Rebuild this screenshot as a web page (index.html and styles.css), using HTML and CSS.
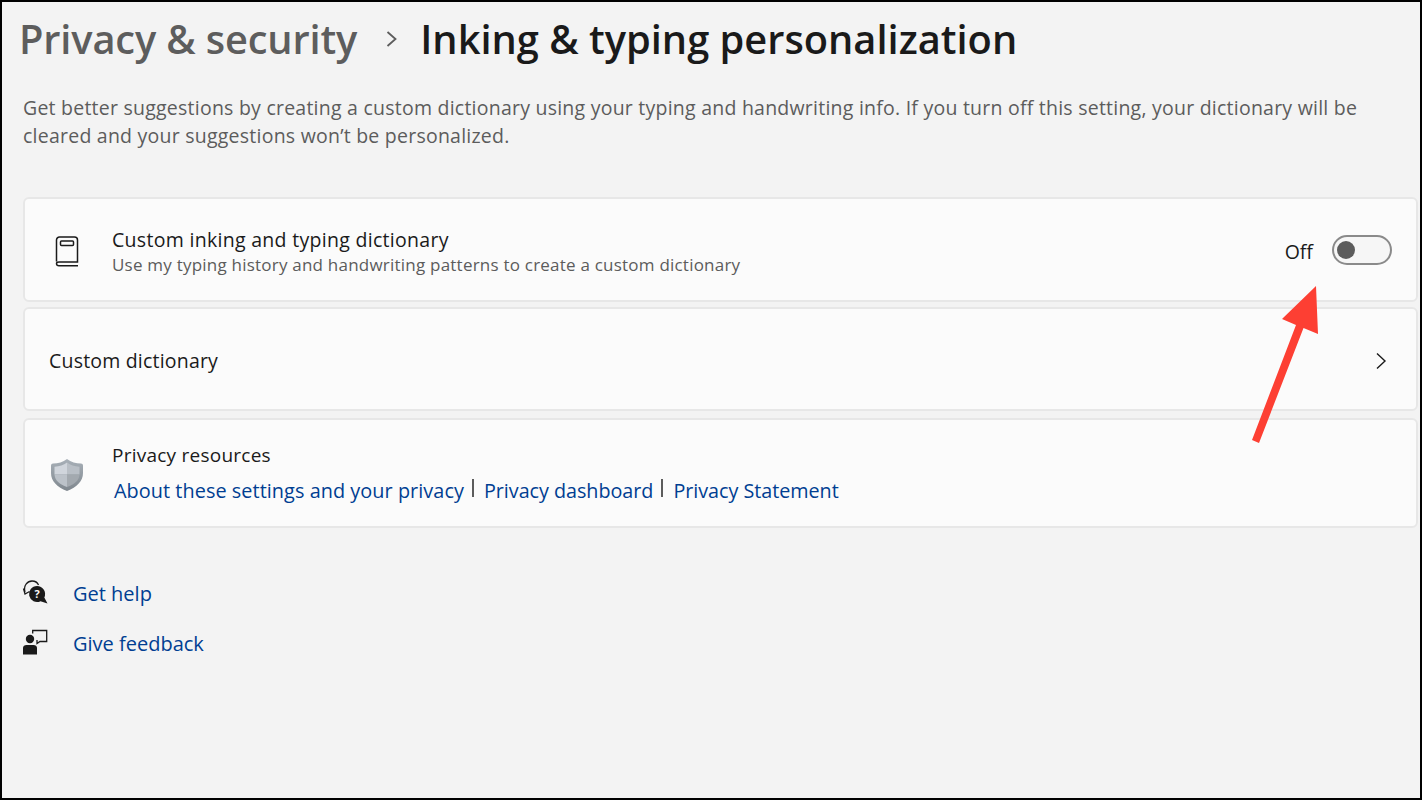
FILE: index.html
```html
<!DOCTYPE html>
<html lang="en">
<head>
<meta charset="utf-8">
<title>Inking &amp; typing personalization</title>
<link rel="stylesheet" href="styles.css">
</head>
<body>
<div class="frame">
  <header class="crumbs">
    <span class="crumb-parent">Privacy &amp; security</span>
    <svg class="crumb-sep" width="14" height="18" viewBox="0 0 14 18"><path d="M2.500 2 L10.500 9 L2.500 16" fill="none" stroke="#5c5c5c" stroke-width="1.800"/></svg>
    <span class="crumb-current">Inking &amp; typing personalization</span>
  </header>
  <p class="intro">Get better suggestions by creating a custom dictionary using your typing and handwriting info. If you turn off this setting, your dictionary will be cleared and your suggestions won’t be personalized.</p>
  <section class="cards">
    <div class="card card-dict">
      <svg class="card-icon" width="24" height="31" viewBox="0 0 24 31"><g fill="none" stroke="#1a1a1a" stroke-width="1.500"><path d="M1.500 25.500 V4 A3 3 0 0 1 4.500 1 H19.500 A3 3 0 0 1 22.500 4 V26 H4 C2.500 26 1.500 26.500 1.500 27.500 C1.500 29 2.500 29.800 4 29.800 H23"/><rect x="5.500" y="5" width="13" height="4.500" rx="1"/></g></svg>
      <div class="card-text">
        <div class="card-title card-title-wide">Custom inking and typing dictionary</div>
        <div class="card-sub">Use my typing history and handwriting patterns to create a custom dictionary</div>
      </div>
      <span class="toggle-label">Off</span>
      <span class="toggle"><span class="knob"></span></span>
    </div>
    <div class="card card-link">
      <span class="card-title card-title-mid">Custom dictionary</span>
      <svg width="12" height="18" viewBox="0 0 12 18"><path d="M2 1.500 L10 9 L2 16.500" fill="none" stroke="#1a1a1a" stroke-width="1.400"/></svg>
    </div>
    <div class="card card-privacy">
      <svg class="shield" width="34" height="34" viewBox="0 0 34 34">
        <defs>
          <linearGradient id="rim" x1="0" y1="0" x2="0" y2="1"><stop offset="0" stop-color="#a8b0b8"/><stop offset="1" stop-color="#7f878e"/></linearGradient>
        </defs>
        <path d="M17 1 C21 4 26 5.500 31 5.500 A2 2 0 0 1 33 7.500 V15 C33 23 27 29 17 33 C7 29 1 23 1 15 V7.500 A2 2 0 0 1 3 5.500 C8 5.500 13 4 17 1 Z" fill="url(#rim)"/>
        <path d="M17 4.500 C20.500 7 24.500 8.500 29.500 8.700 V16.500 H17 Z" fill="#b9bfc6"/>
        <path d="M17 4.500 C13.500 7 9.500 8.500 4.500 8.700 V16.500 H17 Z" fill="#d0d5dc"/>
        <path d="M4.500 16.500 H17 V29 C9.500 26.500 5 22.500 4.500 16.500 Z" fill="#bcc2c9"/>
        <path d="M29.500 16.500 H17 V29 C24.500 26.500 29 22.500 29.500 16.500 Z" fill="#a3a9af"/>
      </svg>
      <div class="card-text">
        <div class="card-title card-title-res">Privacy resources</div>
        <div class="links">
          <a class="link link-about">About these settings and your privacy</a><span class="bar"></span>
          <a class="link link-res">Privacy dashboard</a><span class="bar"></span>
          <a class="link link-res">Privacy Statement</a>
        </div>
      </div>
    </div>
  </section>
  <nav class="help">
    <div class="help-row">
      <svg class="help-icon" width="26" height="26" viewBox="0 0 26 26">
        <path d="M2 11 C0 4 5 0 9 0 C12 0 14.500 1.500 15.500 4" fill="none" stroke="#1a1a1a" stroke-width="1.300"/>
        <path d="M0.500 7.500 L2 13 L6.500 10.500" fill="none" stroke="#1a1a1a" stroke-width="1.300"/>
        <path d="M14 5 A8 8 0 1 0 17.500 20.200 L24.500 22.500 L21.300 16.500 A8 8 0 0 0 14 5 Z" fill="#1a1a1a"/>
        <text class="help-q" x="14" y="17" text-anchor="middle">?</text>
      </svg>
      <a class="link">Get help</a>
    </div>
    <div class="help-row">
      <svg class="help-icon" width="26" height="26" viewBox="0 0 26 26">
        <circle cx="7" cy="8" r="4.200" fill="#1a1a1a"/>
        <path d="M0 23.500 V17 C0 15 1.500 14 3.500 14 H10.500 C12.500 14 14 15 14 17 V23.500 Z" fill="#1a1a1a"/>
        <path d="M9.700 2.500 V-0.500 H23.700 V10.500 H17 L14 12.500 V9" fill="none" stroke="#1a1a1a" stroke-width="1.300"/>
      </svg>
      <a class="link">Give feedback</a>
    </div>
  </nav>
  <svg class="arrow" width="80" height="170" viewBox="0 0 80 170"><path d="M65 3 L67 51 L52.500 45 L8 160 L1 157 L45 42 L31 36 Z" fill="#fd3f33"/></svg>
</div>
</body>
</html>
```
FILE: styles.css
```css
* { box-sizing: border-box; }
html, body { margin: 0; padding: 0; }
body { font-family: "Open Sans", "Noto Sans", sans-serif; background: #f3f3f3; color: #1a1a1a; }
.frame {
  position: relative;
  width: 1422px;
  height: 800px;
  border: 2px solid #000;
  background: #f3f3f3;
  padding: 0 2px 0 21px;
  overflow: hidden;
}
.crumbs { display: flex; align-items: center; height: 73px; margin-left: -4px; font-size: 39.8px; font-weight: 600; }
.crumb-parent { color: #5d5d5d; letter-spacing: -0.15px; }
.crumb-sep { margin: 0 21px 0 28px; }
.crumb-current { color: #1a1a1a; }
.intro { margin: 19px 0 0; font-size: 19.5px; letter-spacing: 0.235px; line-height: 28px; color: #5c5c5c; width: 1380px; }
.cards { display: flex; flex-direction: column; gap: 5px; margin-top: 47px; }
.card {
  display: flex;
  align-items: center;
  background: #fbfbfb;
  border: 2px solid #e7e7e7;
  border-radius: 6px;
}
.card-dict { height: 105px; padding: 3px 24px 0 30px; }
.card-link { height: 104px; padding: 3px 29px 0 24px; justify-content: space-between; margin-bottom: 2px; }
.card-privacy { height: 110px; padding: 1px 0 0 25px; }
.card-icon { flex: none; margin-right: 33px; }
.shield { flex: none; margin-right: 28px; margin-top: 2px; }
.card-text { flex: 1; min-width: 0; }
.card-title { font-size: 19px; letter-spacing: 0.18px; line-height: 26px; color: #1a1a1a; }
.card-title-wide { font-size: 19.5px; letter-spacing: 0.3px; }
.card-title-mid { font-size: 19.5px; letter-spacing: 0.2px; }
.card-title-res { letter-spacing: 0.24px; }
.card-sub { font-size: 17px; letter-spacing: 0.22px; line-height: 23px; color: #5c5c5c; }
.toggle-label { font-size: 19.5px; margin-right: 19px; }
.toggle { display: flex; align-items: center; width: 60px; height: 30px; margin-top: -3px; padding-left: 3px; border: 2px solid #8a8a8a; border-radius: 15px; background: #f6f6f6; }
.knob { width: 18px; height: 18px; border-radius: 50%; background: #5c5c5c; }
.links { display: flex; align-items: center; margin-top: 9px; padding-left: 2px; }
.link { font-size: 20px; line-height: 28px; color: #003e92; white-space: nowrap; }
.link-about { font-size: 19.85px; letter-spacing: 0.055px; }
.link-res { font-size: 19.75px; letter-spacing: -0.03px; }
.bar { width: 2px; height: 18px; margin: -6px 10px 0 8px; background: #5c5c5c; }
.help { display: flex; flex-direction: column; gap: 22px; margin-top: 52px; }
.help-row { display: flex; align-items: center; height: 28px; }
.help-icon { flex: none; margin-right: 24px; overflow: visible; }
.help-q { font-size: 11px; font-weight: 700; fill: #fbfbfb; }
.arrow { position: absolute; left: 1249px; top: 281px; }
```
